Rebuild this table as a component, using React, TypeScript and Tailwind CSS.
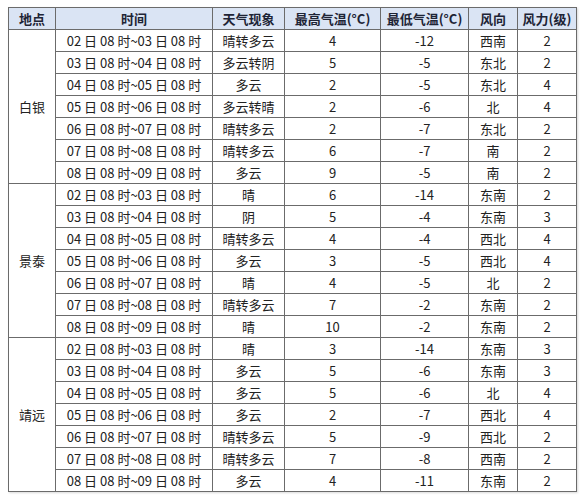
import React from 'react';

type Row = [string, string, string, string, string, string];

const groups: { name: string; rows: Row[] }[] = [
  {
    name: '白银',
    rows: [
      ['02 日 08 时~03 日 08 时', '晴转多云', '4', '-12', '西南', '2'],
      ['03 日 08 时~04 日 08 时', '多云转阴', '5', '-5', '东北', '2'],
      ['04 日 08 时~05 日 08 时', '多云', '2', '-5', '东北', '4'],
      ['05 日 08 时~06 日 08 时', '多云转晴', '2', '-6', '北', '4'],
      ['06 日 08 时~07 日 08 时', '晴转多云', '2', '-7', '东北', '2'],
      ['07 日 08 时~08 日 08 时', '晴转多云', '6', '-7', '南', '2'],
      ['08 日 08 时~09 日 08 时', '多云', '9', '-5', '南', '2'],
    ],
  },
  {
    name: '景泰',
    rows: [
      ['02 日 08 时~03 日 08 时', '晴', '6', '-14', '东南', '2'],
      ['03 日 08 时~04 日 08 时', '阴', '5', '-4', '东南', '3'],
      ['04 日 08 时~05 日 08 时', '晴转多云', '4', '-4', '西北', '4'],
      ['05 日 08 时~06 日 08 时', '多云', '3', '-5', '西北', '4'],
      ['06 日 08 时~07 日 08 时', '晴', '4', '-5', '北', '2'],
      ['07 日 08 时~08 日 08 时', '晴转多云', '7', '-2', '东南', '2'],
      ['08 日 08 时~09 日 08 时', '晴', '10', '-2', '东南', '2'],
    ],
  },
  {
    name: '靖远',
    rows: [
      ['02 日 08 时~03 日 08 时', '晴', '3', '-14', '东南', '3'],
      ['03 日 08 时~04 日 08 时', '多云', '5', '-6', '东南', '3'],
      ['04 日 08 时~05 日 08 时', '多云', '5', '-6', '北', '4'],
      ['05 日 08 时~06 日 08 时', '多云', '2', '-7', '西北', '4'],
      ['06 日 08 时~07 日 08 时', '晴转多云', '5', '-9', '西北', '2'],
      ['07 日 08 时~08 日 08 时', '晴转多云', '7', '-8', '西南', '2'],
      ['08 日 08 时~09 日 08 时', '多云', '4', '-11', '东南', '2'],
    ],
  },
];

const headers = ['地点', '时间', '天气现象', '最高气温(°C)', '最低气温(°C)', '风向', '风力(级)'];
const widths = ['w-[47px]', 'w-[157px]', 'w-[72px]', 'w-[96px]', 'w-[88px]', 'w-[49px]', 'w-[59px]'];

const App = () => {
  return (
    <div
      className="w-[582px] h-[500px] bg-white pl-[8px] pt-[7px]"
      style={{ fontFamily: '"Noto Sans CJK SC", "Noto Sans", sans-serif' }}
    >
      <table className="border-collapse w-[568px] table-fixed text-[13px] text-[#222] shadow-[1px_1px_2px_rgba(0,0,0,0.15)]">
        <colgroup>
          {widths.map((w, i) => (
            <col key={i} className={w} />
          ))}
        </colgroup>
        <thead>
          <tr className="h-[22px] bg-[#dae4f4]">
            {headers.map((h) => (
              <th
                key={h}
                className="border border-[#6b6b6b] p-0 font-bold text-[#1e2436] text-center leading-[20px] whitespace-nowrap"
              >
                {h}
              </th>
            ))}
          </tr>
        </thead>
        <tbody>
          {groups.map((g) =>
            g.rows.map((r, i) => (
              <tr key={g.name + i} className="h-[22px]">
                {i === 0 && (
                  <td
                    rowSpan={g.rows.length}
                    className="border border-[#6b6b6b] p-0 text-center align-middle"
                  >
                    {g.name}
                  </td>
                )}
                {r.map((c, j) => (
                  <td
                    key={j}
                    className="border border-[#6b6b6b] p-0 text-center leading-[20px] whitespace-nowrap"
                  >
                    {c}
                  </td>
                ))}
              </tr>
            ))
          )}
        </tbody>
      </table>
    </div>
  );
};

export default App;
